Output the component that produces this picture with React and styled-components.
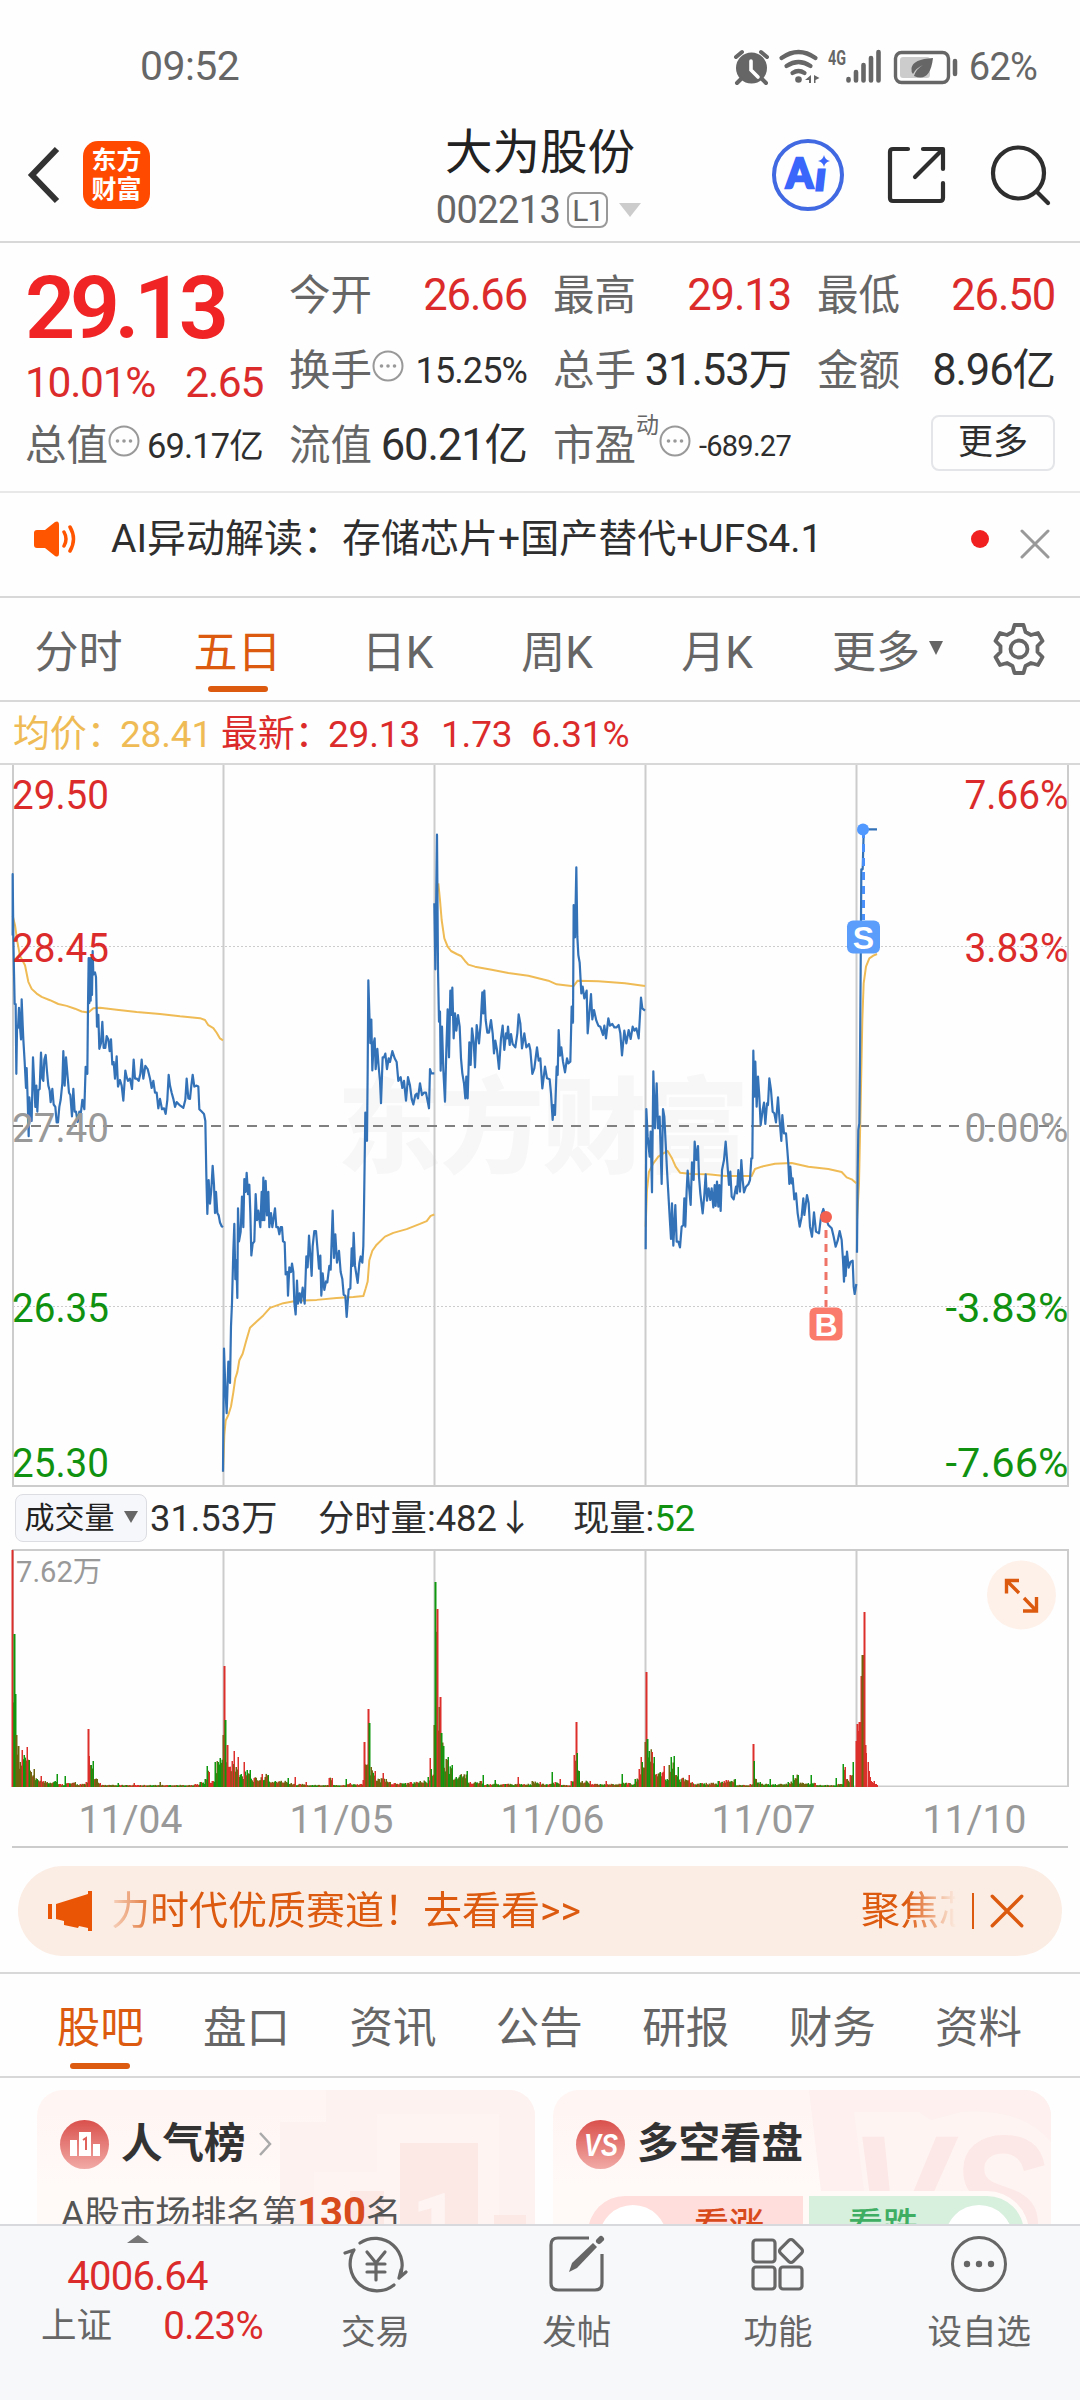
import styled, { createGlobalStyle } from "styled-components"

const RED = "#dc2b2b"
const BIG_RED = "#f02424"
const GREEN = "#109210"
const ORANGE = "#dc5a10"
const GRAY = "#666"
const INK = "#2e2e2e"

/* one trading session = one price line + one average line, in chart units */
const sessions = [
  {
    transform: "translate(0 760) scale(0.33333 0.47192)",
    price: "38,372 38,242 40,372 42,450 44,517 47,517 49,665 51,570 54,567 57,525 60,565 63,592 65,507 68,560 70,592 74,640 78,695 80,653 83,720 86,797 88,715 92,745 95,765 99,630 103,690 106,735 109,690 112,745 115,700 119,697 123,620 127,675 130,680 133,635 137,625 141,660 145,690 149,700 152,725 157,697 161,730 166,735 170,768 174,768 178,735 182,720 187,685 190,617 194,690 198,630 203,672 207,705 211,710 216,755 220,697 224,745 228,745 233,767 238,745 242,752 247,720 253,740 257,650 262,665 264,520 266,420 268,515 270,420 272,510 274,420 276,498 278,405 280,455 285,450 288,460 291,565 295,540 298,612 303,600 307,555 311,610 316,610 320,585 325,592 329,617 333,592 337,645 341,640 345,675 350,628 354,692 360,678 365,690 370,722 376,658 380,672 384,680 390,675 396,697 401,635 405,675 410,675 416,680 421,665 425,635 430,675 436,648 443,655 450,675 455,695 460,680 465,705 470,705 475,738 480,718 486,740 492,738 497,750 502,720 506,667 510,690 515,705 520,718 525,735 530,725 540,732 550,737 556,720 560,675 565,717 570,718 574,690 578,667 583,692 590,690 595,692 598,740 605,745 612,750 616,765 619,880 622,962 626,890 630,940 634,910 638,860 642,900 645,960 648,915 652,960 656,965 660,980 665,988 669,990",
    avg: "38,330 45,350 52,385 60,415 75,435 85,470 95,485 110,495 125,502 150,509 175,517 200,521 225,527 245,533 265,535 280,526 300,525 350,529 410,534 480,538 540,543 600,547 615,551 625,562 640,568 650,578 660,590 669,594",
  },
  {
    transform: "translate(0 760) scale(0.33333 0.47192)",
    price: "669,1508 672,1247 676,1330 680,1384 685,1275 690,1320 693,1200 696,1150 700,1040 703,983 706,1100 709,1060 712,1140 714,950 717,1020 722,1000 726,925 730,990 733,888 737,915 740,875 744,920 748,900 751,960 754,1050 758,1025 763,1020 767,920 771,975 775,955 781,990 785,915 788,975 790,885 793,975 797,892 801,965 805,915 808,990 813,960 817,990 825,950 829,990 834,990 838,1005 842,990 846,990 849,1020 854,1022 857,1090 862,1085 864,1135 868,1075 873,1085 876,1067 880,1085 883,1150 887,1175 891,1103 894,1152 899,1130 903,1150 908,1118 914,1152 919,1052 923,1075 927,1008 931,1050 935,1093 938,1030 943,998 948,998 953,1040 957,1078 961,1050 964,1135 968,1088 973,1123 978,1105 982,1107 988,1072 992,1080 998,955 1002,1055 1006,1005 1011,1065 1017,1040 1022,1085 1027,1100 1031,1133 1036,1135 1040,1180 1046,1122 1051,1120 1055,1035 1058,1072 1061,1002 1065,1072 1073,1108 1078,1067 1082,1052 1087,1065 1090,1030 1092,950 1094,850 1096,747 1101,807 1103,660 1105,467 1108,535 1111,600 1114,550 1117,658 1121,600 1124,590 1127,655 1132,612 1136,650 1140,680 1143,727 1148,630 1152,630 1156,622 1161,655 1166,632 1170,640 1177,617 1184,632 1190,640 1195,680 1202,672 1207,695 1212,680 1218,722 1224,672 1230,690 1235,718 1240,730 1246,710 1250,707 1254,717 1260,685 1266,710 1272,705 1278,705 1287,738 1290,655 1294,664 1303,664",
    avg: "669,1508 673,1430 677,1400 685,1388 693,1370 700,1340 706,1310 712,1297 718,1272 728,1258 738,1232 750,1203 770,1190 790,1177 810,1161 850,1151 890,1146 950,1144 1010,1140 1060,1138 1090,1136 1097,1120 1103,1105 1108,1060 1117,1040 1130,1027 1155,1010 1180,1002 1220,994 1260,983 1280,977 1292,966 1303,963",
  },
  {
    transform: "translate(425 820) scale(0.33333)",
    price: "28,250 31,448 36,44 39,450 42,605 45,575 47,752 51,620 55,750 60,845 64,690 68,568 72,712 76,512 79,585 82,503 86,655 90,580 94,632 99,585 104,620 108,715 112,760 117,790 121,835 124,770 128,835 133,667 137,735 141,625 146,665 150,742 155,615 162,670 167,610 172,517 175,580 178,512 182,600 187,638 192,638 198,600 203,640 207,700 211,662 216,690 222,747 228,655 233,617 238,690 243,640 246,655 249,620 254,675 258,642 263,672 271,682 277,640 281,583 286,610 291,685 298,640 304,682 312,672 316,690 322,762 328,745 336,682 341,722 346,715 352,805 360,740 366,775 374,778 378,820 383,900 386,855 390,885 395,740 398,765 401,630 405,707 409,682 414,725 420,757 426,715 430,730 436,725 440,560 444,608 446,255 450,352 454,142 457,350 460,405 464,428 469,520 473,500 478,535 485,512 488,640 493,580 498,522 502,598 507,570 514,602 520,617 526,620 534,645 538,617 543,655 550,595 555,617 562,612 568,622 575,622 581,615 586,640 591,706 598,632 604,670 611,630 617,657 623,620 628,632 634,625 641,655 648,533 652,565 660,572",
    avg: "40,190 45,240 50,300 58,355 68,380 78,393 95,402 108,408 120,423 130,434 150,440 200,449 250,459 310,467 370,482 395,493 445,499 458,482 520,484 600,490 660,498",
  },
  {
    transform: "translate(425 820) scale(0.33333)",
    price: "662,1288 664,867 668,950 674,1010 677,935 681,1117 685,754 690,925 695,790 699,925 704,890 710,1092 714,867 718,890 722,970 726,1050 730,1120 734,1190 738,1257 741,1150 745,1277 751,1155 755,1265 760,1265 765,1282 770,1220 775,1215 778,1135 781,1220 785,1110 788,1052 792,1100 797,1155 801,1027 806,1080 809,965 814,1020 819,978 822,1070 826,1120 833,1180 838,1125 842,1063 846,1142 851,1105 856,1140 860,1105 865,1162 869,1095 872,1158 876,1085 880,1160 883,1095 887,1173 891,1050 897,1020 902,965 907,1030 912,1095 916,1055 920,1130 926,1138 933,1100 936,1120 940,1050 945,1115 949,1020 953,1080 957,1117 963,1100 970,1093 975,1080 979,1015 982,1015 985,692 988,830 991,725 995,860 999,770 1003,830 1007,915 1013,870 1017,848 1021,912 1026,850 1029,855 1033,775 1038,810 1043,875 1048,880 1053,907 1059,832 1063,890 1069,963 1072,885 1077,940 1083,940 1087,990 1090,1030 1093,1092 1096,1040 1100,1090 1103,1075 1108,1138 1113,1120 1118,1180 1124,1220 1130,1190 1135,1135 1138,1185 1146,1125 1151,1150 1155,1220 1161,1250 1167,1177 1173,1235 1182,1240 1188,1190 1195,1167 1203,1195 1210,1215 1220,1225 1226,1250 1232,1280 1238,1262 1244,1233 1250,1260 1254,1320 1257,1385 1260,1310 1262,1368 1266,1295 1271,1343 1277,1325 1283,1322 1286,1400 1289,1422 1294,1392",
    avg: "662,1220 666,1110 672,1055 685,1030 700,1010 715,1000 728,993 740,1013 752,1040 765,1058 800,1062 850,1063 900,1068 980,1068 990,1047 1010,1040 1050,1031 1100,1029 1150,1040 1210,1047 1250,1056 1265,1072 1280,1078 1294,1090",
  },
  {
    transform: "translate(425 820) scale(0.33333)",
    price: "1296,1298 1298,1060 1300,930 1303,910 1305,720 1307,450 1309,148 1313,148 1316,40 1318,28 1356,28",
    avg: "1296,1200 1302,1090 1307,850 1312,600 1316,490 1323,440 1333,415 1345,407 1356,402",
  },
]

/* x:height:colour  (r = up, g = down, m = both in one pixel) */
const volumePeaks =
  "12:237:r 14:153:g 15:93:g 16:52:m 18:41:m 20:25:m 22:37:r 24:32:g 27:40:r 29:27:g 31:15:m 34:18:m 37:8:g 41:11:r 45:6:m 55:6:g 57:13:g 60:3:r 65:11:g 68:4:r 75:5:m 80:3:r 86:5:r 88:58:r 89:31:r 91:22:g 93:26:g 95:8:m 97:8:m 100:4:r 110:2:m 118:4:g 126:2:g 134:4:r 140:2:m 160:5:m 170:2:g 195:3:r 200:5:g 205:8:g 207:21:g 209:15:r 212:6:r 215:25:g 218:25:g 220:29:g 223:52:m 224:121:r 225:67:g 227:42:r 229:20:r 232:26:r 234:36:r 236:20:m 238:30:r 241:13:g 244:25:r 247:17:g 250:17:g 254:9:r 262:13:r 268:12:g 275:6:g 288:9:g 291:4:m 295:10:r 300:3:r 306:5:r 312:2:g 327:2:m 329:9:r 332:9:r 336:2:m 346:8:g 350:4:r 360:3:r 363:7:r 364:45:r 366:22:m 368:78:r 369:64:g 371:20:m 375:16:r 379:8:m 383:14:r 386:8:m 390:5:m 405:4:g 410:5:r 420:6:m 428:10:g 430:29:r 431:18:g 434:62:m 435:205:g 437:178:r 439:80:m 440:90:r 441:54:g 443:41:g 446:28:m 448:30:g 452:22:g 456:10:g 460:12:g 467:16:g 470:5:r 480:6:m 483:12:g 487:3:g 495:7:g 505:3:g 515:3:m 518:10:r 521:3:g 532:6:m 540:5:r 550:3:m 552:15:g 555:5:r 560:8:r 566:2:m 571:6:r 574:32:r 576:65:r 577:34:g 579:16:g 582:6:m 590:6:r 600:3:g 606:6:r 620:3:r 622:13:g 625:4:g 635:8:g 639:18:r 641:30:r 642:25:g 645:45:m 646:115:r 647:48:g 649:36:g 652:35:r 654:30:g 656:13:r 660:15:g 664:21:r 667:8:g 669:22:m 671:30:g 674:31:g 676:12:m 678:20:g 682:9:r 689:12:r 692:5:r 700:4:g 718:6:g 726:7:r 735:8:g 740:2:m 750:3:r 753:43:r 754:26:g 756:8:m 760:5:g 768:3:g 770:8:g 775:3:g 788:5:g 793:12:g 798:12:g 803:4:m 808:4:g 811:12:g 815:4:r 825:2:g 836:9:g 840:3:m 843:23:g 845:20:r 847:8:m 850:12:r 853:25:g"

const todayVolume = "856:46:r 857:63:r 858:56:r 859:65:r 860:65:r 861:111:r 862:132:m 863:132:m 864:175:r 865:42:r 866:34:r 868:25:r 869:16:r 870:10:r 871:6:r 872:5:r 873:4:r 874:6:r 875:3:r 876:3:r 877:2:r"

const volumeColors = { r: "#dc2f2b", g: "#0f980f", m: "#70650f" }

function parseBars(text) {
  return text.split(" ").map((item) => {
    const [x, h, c] = item.split(":")
    return { x: Number(x), h: Number(h), c }
  })
}

// the quiet minutes between two peaks get a small, repeatable jitter
function fillBars(peaks) {
  const bars = []
  for (let i = 0; i < peaks.length - 1; i++) {
    const a = peaks[i]
    const b = peaks[i + 1]
    for (let x = a.x + 1; x < b.x; x++) {
      const low = Math.min(a.h, b.h)
      const noise = Math.abs(Math.sin(x * 12.9898) * 43758.5453) % 1
      bars.push({ x, h: Math.max(1.5, low * (0.55 + noise * 0.55)), c: "grmmgrm"[Math.floor(noise * 7)] })
    }
  }
  return bars
}

const peaks = parseBars(volumePeaks)
const bars = [...fillBars(peaks), ...peaks, ...parseBars(todayVolume)]

const priceLabels = [
  { y: 808.5, left: "29.50", right: "7.66%", color: RED, w: 104 },
  { y: 962, left: "28.45", right: "3.83%", color: RED, w: 104 },
  { y: 1142, left: "27.40", right: "0.00%", color: "#999", w: 104 },
  { y: 1322, left: "26.35", right: "-3.83%", color: GREEN, w: 123 },
  { y: 1476.5, left: "25.30", right: "-7.66%", color: GREEN, w: 123 },
]

const Dots = () => (
  <svg width="32" height="32" viewBox="0 0 32 32">
    <circle cx="16" cy="16" r="14.5" fill="none" stroke="#999" strokeWidth="2" />
    <circle cx="9.5" cy="16" r="1.8" fill="#999" />
    <circle cx="16" cy="16" r="1.8" fill="#999" />
    <circle cx="22.5" cy="16" r="1.8" fill="#999" />
  </svg>
)

const StatusIcons = () => (
  <svg width="226" height="36" viewBox="734 47 226 36" fill={GRAY}>
    <circle cx="752.5" cy="66" r="15.5" />
    <path d="M737 55l6-5M768 55l-6-5M742 77l-4 4M763 77l4 4" stroke={GRAY} strokeWidth="4" strokeLinecap="round" />
    <path d="M752 59v9l7 7" fill="none" stroke="#fff" strokeWidth="3.6" strokeLinecap="round" />
    <g fill="none" stroke={GRAY} strokeWidth="4.2" strokeLinecap="round">
      <path d="M782.500 56q17-12 34 0M787.500 64q12-8 24 0M793.500 71q6-4 12 0" />
    </g>
    <circle cx="799.500" cy="77.500" r="3.300" />
    <path d="M812 73v8h-2v-3h-4zM815 73v8h1.500v-3l4-2z" />
    <text x="829" y="62.500" fontSize="20" fontWeight="700" textLength="18" lengthAdjust="spacingAndGlyphs">4G</text>
    <g stroke={GRAY} strokeWidth="4.6" strokeLinecap="round">
      <path d="M849.500 77v1.500M857 70v8.500M864.500 63v15.500M872 56v22.500M879.500 50v28.500" />
    </g>
    <rect x="896.500" y="50.500" width="53" height="30" rx="6" fill="none" stroke={GRAY} strokeWidth="3.4" />
    <rect x="901" y="55" width="30" height="21" rx="3" fill="#ccc" />
    <path d="M934 56q-20 1-21.500 10-.5 4 1.500 6 3-6 10-9-7 4-9 11 16 7 19-18z" />
    <path d="M956 59v13" stroke={GRAY} strokeWidth="4.500" strokeLinecap="round" />
  </svg>
)

const ShareIcon = () => (
  <svg width="60" height="60" viewBox="0 0 60 60" fill="none" stroke={INK} strokeWidth="4.200" strokeLinecap="round" strokeLinejoin="round">
    <path d="M22 4H7q-3 0-3 3v46q0 3 3 3h47q3 0 3-3V38" />
    <path d="M37 4h20v20M56 5L29 32" />
  </svg>
)

const SearchIcon = () => (
  <svg width="62" height="62" viewBox="0 0 62 62" fill="none" stroke={INK} strokeWidth="4.200" strokeLinecap="round">
    <circle cx="29.500" cy="29" r="25.500" />
    <path d="M48 48l11 11" />
  </svg>
)

const AiIcon = () => (
  <svg width="74" height="74" viewBox="0 0 74 74">
    <circle cx="37" cy="37" r="34" fill="none" stroke="#4169e1" strokeWidth="4" />
    <text x="15" y="50" fontFamily="Lato, Liberation Sans" fontSize="41" fontWeight="900" fill="#3a66fb" stroke="#3a66fb" strokeWidth="2.500" textLength="27" lengthAdjust="spacingAndGlyphs">A</text>
    <text x="45" y="52" fontFamily="Lato, Liberation Sans" fontSize="37" fontWeight="900" fontStyle="italic" fill="#3a66fb" stroke="#3a66fb" strokeWidth="3">ı</text>
    <path d="M53 17q1 5 6 6-5 1-6 6-1-5-6-6 5-1 6-6z" fill="#3a66fb" />
  </svg>
)

const SpeakerIcon = () => (
  <svg width="46" height="38" viewBox="0 0 46 38">
    <path d="M4 10h8L22 2q4-2 4 3v28q0 5-4 3L12 28H4q-3 0-3-3V13q0-3 3-3z" fill="#ff5500" />
    <path d="M31 12q4 7 0 14M37 7q7 12 0 24" fill="none" stroke="#ff5500" strokeWidth="3.500" strokeLinecap="round" />
  </svg>
)

const GearIcon = () => (
  <svg width="54" height="54" viewBox="0 0 54 54" fill="none" stroke={GRAY} strokeWidth="3.800" strokeLinejoin="round">
    <path d="M22.500 3h9l2 7 5.500 3 7-2 4.500 8-5 5v6l5 5-4.500 8-7-2-5.500 3-2 7h-9l-2-7-5.500-3-7 2-4.500-8 5-5v-6l-5-5 4.500-8 7 2 5.500-3z" />
    <circle cx="27" cy="27" r="8.500" />
  </svg>
)

const MegaphoneIcon = () => (
  <svg width="46" height="40" viewBox="0 0 46 40" fill="#e95504">
    <path d="M0 13h4v15H0zM8 13L40 3V0h4v40h-4v-3l-9-2-1 2-14-3v-4l-8-2z" />
  </svg>
)

const TradeIcon = () => (
  <svg width="66" height="60" viewBox="0 0 66 60" fill="none" stroke={GRAY} strokeWidth="3.200" strokeLinecap="round" strokeLinejoin="round">
    <path d="M2 19l9-3A27 27 0 0 0 51 51M17 9A27 27 0 0 1 56 44l7-6M56 44l2-8" />
    <path d="M24 18l9 11 9-11M33 29v17M24 30h18M24 38h18" />
  </svg>
)

const PostIcon = () => (
  <svg width="58" height="58" viewBox="0 0 58 58" fill="none" stroke={GRAY} strokeWidth="3.200">
    <path d="M41 3H10q-7 0-7 7v38q0 7 7 7h37q7 0 7-7V19" />
    <path d="M21 37l3-9L45 8l4 4-20 21z" fill={GRAY} stroke="none" />
    <path d="M51 6l2-2" strokeWidth="6" strokeLinecap="round" />
  </svg>
)

const AppsIcon = () => (
  <svg width="56" height="56" viewBox="0 0 56 56" fill="none" stroke={GRAY} strokeWidth="3.200">
    <rect x="3" y="4" width="22" height="22" rx="3" />
    <rect x="3" y="31" width="22" height="22" rx="3" />
    <rect x="30" y="31" width="22" height="22" rx="3" />
    <rect x="32" y="6" width="18" height="18" rx="3" transform="rotate(45 41 15)" />
  </svg>
)

const MoreIcon = () => (
  <svg width="58" height="58" viewBox="0 0 58 58" fill={GRAY}>
    <circle cx="29" cy="29" r="26.500" fill="none" stroke={GRAY} strokeWidth="3" />
    <circle cx="17" cy="29" r="3.200" />
    <circle cx="29" cy="29" r="3.200" />
    <circle cx="41" cy="29" r="3.200" />
  </svg>
)

const CloseIcon = ({ size, color, width = 3 }) => (
  <svg width={size} height={size} viewBox="0 0 30 30" stroke={color} strokeWidth={width} strokeLinecap="round">
    <path d="M2 2l26 26M28 2L2 28" />
  </svg>
)

const Triangle = ({ w, h, color, up }) => (
  <svg width={w} height={h} viewBox="0 0 10 10" preserveAspectRatio="none" fill={color}>
    <path d={up ? "M0 10h10L5 0z" : "M0 0h10L5 10z"} />
  </svg>
)

const PriceChart = () => (
  <svg width="1080" height="722" viewBox="0 765 1080 722">
    <text x="337" y="1165" fontSize="104" fontWeight="900" fill="#f7f7f7" textLength="412">东方财富</text>
    <g stroke="#ccc" strokeWidth="2" fill="none">
      <path d="M13 764V1486M223.500 764V1486M434.500 764V1486M645.500 764V1486M856.500 764V1486M1068 764V1486M12 1486H1069" />
      <path d="M13 946.500H1068M13 1306.500H1068" strokeWidth="1" strokeDasharray="2 2" />
    </g>
    <path d="M13 1126H1060" stroke="#808080" strokeWidth="2" strokeDasharray="10 8" />
    {sessions.map((s) => (
      <g key={s.price.slice(0, 12)} transform={s.transform} fill="none" strokeLinejoin="round">
        <polyline points={s.avg} stroke="#efbb55" strokeWidth="2" vectorEffect="non-scaling-stroke" />
        <polyline points={s.price} stroke="#3472b8" strokeWidth="2.200" vectorEffect="non-scaling-stroke" />
      </g>
    ))}
    <path d="M863.500 830V920" stroke="#4a90fb" strokeWidth="3" strokeDasharray="8 6" />
    <circle cx="863" cy="829.500" r="6" fill="#5199ff" />
    <path d="M826 1230V1307" stroke="#ee7468" strokeWidth="3" strokeDasharray="8 6" />
    <circle cx="826" cy="1217" r="6" fill="#f4604f" />
    {priceLabels.map((l) => (
      <g key={l.left} fontSize="41.500" fill={l.color}>
        <text x="12" y={l.y} textLength="97" lengthAdjust="spacingAndGlyphs">{l.left}</text>
        <text x={1068.5 - l.w} y={l.y} textLength={l.w} lengthAdjust="spacingAndGlyphs">{l.right}</text>
      </g>
    ))}
    <g fontFamily="Liberation Sans" fontWeight="700" fontSize="32" fill="#fff" textAnchor="middle">
      <rect x="847" y="920.500" width="33" height="33" rx="6" fill="#5b9dfb" />
      <text x="863.500" y="948.500">S</text>
      <rect x="809.500" y="1307.500" width="33" height="33" rx="6" fill="#fa7a6c" />
      <text x="826" y="1335.500">B</text>
    </g>
  </svg>
)

const VolumeChart = () => (
  <svg width="1080" height="238" viewBox="0 1549 1080 238">
    <path d="M12 1550H1069M12 1786.500H1069M13 1550V1786M223.500 1550V1786M434.500 1550V1786M645.500 1550V1786M856.500 1550V1786M1068 1550V1786" stroke="#ccc" strokeWidth="2" />
    {bars.map((b, i) => (
      <rect key={i} x={b.x - 0.5} y={1787 - b.h} width={b.h > 40 ? 2 : 1.5} height={b.h} fill={volumeColors[b.c]} />
    ))}
    <text x="16" y="1582" fontSize="29" fill="#999" textLength="86" lengthAdjust="spacingAndGlyphs">7.62万</text>
    <circle cx="1021.500" cy="1595" r="34.500" fill="#fef1ea" />
    <path d="M1019 1580.500h-12.500v13M1007.500 1581.500l11.500 11.500M1023 1611h13.500v-14M1035.500 1610l-11.500-12" fill="none" stroke={ORANGE} strokeWidth="3.400" />
  </svg>
)

export default function App() {
  return (
    <Screen>
      <GlobalStyle />
      <StatusBar>
        <Txt $size={41} $color={GRAY} $track={-0.6}>09:52</Txt>
        <StatusRight>
          <StatusIcons />
          <Txt $size={38} $color={GRAY} $track={-0.8}>62%</Txt>
        </StatusRight>
      </StatusBar>

      <Header>
        <HeaderSide>
          <svg width="34" height="58" viewBox="0 0 34 58" fill="none" stroke="#333" strokeWidth="6">
            <path d="M30 3L5 29l25 26" />
          </svg>
          <Logo>
            <span>东方</span>
            <span>财富</span>
          </Logo>
        </HeaderSide>
        <TitleBlock>
          <Title>大为股份</Title>
          <CodeRow>
            <Txt $size={38} $color={GRAY} $track={-0.6}>002213</Txt>
            <Level>L1</Level>
            <Triangle w={22} h={14} color="#ccc" />
          </CodeRow>
        </TitleBlock>
        <HeaderActions>
          <AiIcon />
          <ShareIcon />
          <SearchIcon />
        </HeaderActions>
      </Header>

      <Quotes>
        <Headline>
          <BigPrice>29.13</BigPrice>
          <ChangeRow>
            <Txt $size={42.5} $color={RED} $track={-1.3}>10.01%</Txt>
            <Txt $size={42.5} $color={RED} $track={-1.3}>2.65</Txt>
          </ChangeRow>
        </Headline>
        <Cell><Label>今开</Label><Value $color={RED}>26.66</Value></Cell>
        <Cell><Label>最高</Label><Value $color={RED}>29.13</Value></Cell>
        <Cell><Label>最低</Label><Value $color={RED}>26.50</Value></Cell>
        <Cell><Label>换手<Dots /></Label><Value $size={36}>15.25%</Value></Cell>
        <Cell><Label>总手</Label><Value>31.53万</Value></Cell>
        <Cell><Label>金额</Label><Value>8.96亿</Value></Cell>
        <Cell><Label>总值<Dots /></Label><Value $size={34.5}>69.17亿</Value></Cell>
        <Cell><Label>流值</Label><Value>60.21亿</Value></Cell>
        <Cell><Label>市盈<Sup>动</Sup><Dots /></Label><Value $size={29}>-689.27</Value></Cell>
        <Cell><span /><MoreButton>更多</MoreButton></Cell>
      </Quotes>

      <Notice>
        <SpeakerIcon />
        <NoticeText>AI异动解读：存储芯片+国产替代+UFS4.1</NoticeText>
        <RedDot />
        <CloseBox>
          <CloseIcon size={30} color="#999" />
        </CloseBox>
      </Notice>

      <PeriodTabs>
        <Period>分时</Period>
        <Period $active>五日</Period>
        <Period>日K</Period>
        <Period>周K</Period>
        <Period>月K</Period>
        <Period>更多<Triangle w={14} h={14} color={GRAY} /></Period>
        <GearIcon />
      </PeriodTabs>

      <AverageRow>
        <Avg $w={107} $color="#efbb55">均价：</Avg>
        <Avg $w={101} $color="#efbb55">28.41</Avg>
        <Avg $w={107} $color={RED}>最新：</Avg>
        <Avg $w={113} $color={RED}>29.13</Avg>
        <Avg $w={90} $color={RED}>1.73</Avg>
        <Avg $color={RED}>6.31%</Avg>
      </AverageRow>

      <PriceChart />

      <VolumeHead>
        <Picker>成交量<Triangle w={14} h={12} color={GRAY} /></Picker>
        <VolText $w={168}>31.53万</VolText>
        <VolText $w={255}>分时量:482↓</VolText>
        <VolText>现量:<b>52</b></VolText>
      </VolumeHead>
      <VolumeChart />
      <Dates>
        {["11/04", "11/05", "11/06", "11/07", "11/10"].map((d) => (
          <span key={d}>{d}</span>
        ))}
      </Dates>

      <BannerArea>
        <Banner>
          <MegaphoneIcon />
          <Ticker>
            <span>力时代优质赛道！去看看&gt;&gt;</span>
            <span>聚焦芯</span>
          </Ticker>
          <Divider />
          <CloseIcon size={34} color={ORANGE} />
        </Banner>
      </BannerArea>

      <InfoTabs>
        {["股吧", "盘口", "资讯", "公告", "研报", "财务", "资料"].map((t, i) => (
          <InfoTab key={t} $active={i === 0}>{t}</InfoTab>
        ))}
      </InfoTabs>

      <Cards>
        <Card>
          <CardArt width="498" height="134" viewBox="37 2090 498 134">
            <path d="M315 2122h11v-32h209v134H280v-102z" fill="#fdf2f0" />
            <path d="M314 2172h63v-58h122v110H314z" fill="#fef5f2" />
            <path d="M400 2143h78v81h-78zM350 2191h34v33h-34zM494 2215h32v9h-32z" fill="#fce9e6" />
            <text x="412" y="2250" fontSize="80" fontWeight="900" fill="#fef5f2">1</text>
          </CardArt>
          <CardHead>
            <Badge>
              <svg width="32" height="28" viewBox="0 0 32 28" fill="#fff">
                <path d="M1 10h7v16H1zM10 2h12v24H10zM24 14h7v12h-7z" />
                <path d="M14 10l3-2v12" fill="none" stroke="#e0605c" strokeWidth="2" />
              </svg>
            </Badge>
            <span>人气榜</span>
            <svg width="15" height="24" viewBox="0 0 15 24" fill="none" stroke="#aaa" strokeWidth="2.500">
              <path d="M2 1l10 11L2 23" />
            </svg>
          </CardHead>
          <Rank>A股市场排名第<b>130</b>名</Rank>
        </Card>
        <Card>
          <CardArt width="498" height="134" viewBox="553 2090 498 134">
            <path d="M809 2090h242v134H825z" fill="#fdf0ee" />
            <path d="M854 2112h65l12 8 30-8q60-5 90 30v82H868z" fill="#fef4f2" />
            <text x="850" y="2262" fontFamily="Liberation Sans" fontSize="182" fontWeight="700" fontStyle="italic" fill="#fce8e6" textLength="196" lengthAdjust="spacingAndGlyphs">VS</text>
          </CardArt>
          <CardHead>
            <Badge>
              <svg width="40" height="30" viewBox="0 0 40 30">
                <text x="3" y="27" fontFamily="Liberation Sans" fontSize="32" fontWeight="700" fontStyle="italic" fill="#fff" textLength="34" lengthAdjust="spacingAndGlyphs">VS</text>
              </svg>
            </Badge>
            <span>多空看盘</span>
          </CardHead>
          <Poll>
            <Side $up><Knob />看涨</Side>
            <Side>看跌<Knob /></Side>
          </Poll>
        </Card>
      </Cards>

      <BottomBar>
        <IndexBox>
          <Triangle w={22} h={8} color="#777" up />
          <Txt $size={40} $color={RED} $track={-0.7}>4006.64</Txt>
          <IndexRow>
            <Txt $size={35.5} $color={GRAY}>上证</Txt>
            <Txt $size={38.5} $color={RED} $track={-0.7}>0.23%</Txt>
          </IndexRow>
        </IndexBox>
        <Action><TradeIcon />交易</Action>
        <Action><PostIcon />发帖</Action>
        <Action><AppsIcon />功能</Action>
        <Action><MoreIcon />设自选</Action>
      </BottomBar>
    </Screen>
  )
}

const GlobalStyle = createGlobalStyle`
  * {
    box-sizing: border-box;
  }
  body {
    margin: 0;
    background: #fefefe;
    font-family: Roboto, "Noto Sans CJK SC", sans-serif;
  }
  svg {
    display: block;
    flex: none;
  }
`;

const Screen = styled.div`
  width: 1080px;
  height: 2400px;
  overflow: hidden;
  display: flex;
  flex-direction: column;
  background: #fefefe;
  color: ${INK};
  white-space: nowrap;
`;

const Txt = styled.span`
  font-size: ${(p) => p.$size}px;
  color: ${(p) => p.$color};
  letter-spacing: ${(p) => p.$track || 0}px;
  line-height: 1;
`;

const StatusBar = styled.div`
  height: 100px;
  padding: 33px 43px 0 140px;
  display: flex;
  justify-content: space-between;
  align-items: center;
  flex: none;
`;

const StatusRight = styled.div`
  display: flex;
  align-items: center;
  gap: 10px;
  svg {
    overflow: visible;
  }
`;

const Header = styled.header`
  height: 143px;
  flex: none;
  display: grid;
  grid-template-columns: 420px 240px 1fr;
  border-bottom: 2px solid #d8d8d8;
`;

const HeaderSide = styled.div`
  display: flex;
  align-items: center;
  gap: 22px;
  padding: 9px 0 0 27px;
`;

const Logo = styled.div`
  width: 67px;
  height: 68px;
  border-radius: 15px;
  background: #ff4a00;
  color: #fff;
  font-size: 25px;
  font-weight: 700;
  line-height: 29px;
  display: flex;
  flex-direction: column;
  align-items: center;
  justify-content: center;
`;

const TitleBlock = styled.div`
  display: flex;
  flex-direction: column;
  align-items: center;
  padding-top: 27px;
`;

const Title = styled.div`
  font-size: 47.5px;
  line-height: 52px;
  color: #222;
`;

const CodeRow = styled.div`
  display: flex;
  align-items: center;
  height: 38px;
  margin: 12px 0 0 -3px;
  gap: 7px;
  svg {
    margin-left: 4px;
  }
`;

const Level = styled.div`
  width: 41px;
  height: 36px;
  border: 2px solid #999;
  border-radius: 8px;
  font-size: 30px;
  letter-spacing: -1px;
  line-height: 33px;
  text-align: center;
  color: ${GRAY};
`;

const HeaderActions = styled.div`
  display: flex;
  align-items: center;
  padding: 8px 0 0 111px;
  gap: 41px;
  svg:last-child {
    margin-left: 2px;
  }
`;

const Quotes = styled.section`
  height: 250px;
  flex: none;
  padding: 15px 25px 0;
  display: grid;
  grid-template-columns: repeat(4, 238px);
  grid-auto-rows: 75px;
  column-gap: 26px;
  border-bottom: 2px solid #e8e8e8;
`;

const Headline = styled.div`
  grid-row: span 2;
`;

const BigPrice = styled.div`
  font-size: 88px;
  font-weight: 600;
  letter-spacing: -5.5px;
  line-height: 99px;
  color: ${BIG_RED};
`;

const ChangeRow = styled.div`
  display: flex;
  justify-content: space-between;
  align-items: center;
  height: 50px;
  padding-top: 2px;
`;

const Cell = styled.div`
  display: flex;
  justify-content: space-between;
  align-items: center;
`;

const Label = styled.span`
  display: flex;
  align-items: center;
  font-size: 41.5px;
  line-height: 48px;
  color: ${GRAY};
  svg {
    margin-bottom: 10px;
  }
`;

const Sup = styled.span`
  font-size: 23px;
  line-height: 24px;
  margin-bottom: 39px;
`;

const Value = styled.span`
  font-size: ${(p) => p.$size || 43.5}px;
  letter-spacing: -0.025em;
  line-height: 48px;
  color: ${(p) => p.$color || INK};
`;

const MoreButton = styled.div`
  width: 124px;
  height: 56px;
  margin-bottom: 6px;
  border: 2px solid #e4e5e8;
  border-radius: 8px;
  font-size: 35px;
  line-height: 51px;
  text-align: center;
`;

const Notice = styled.div`
  height: 105px;
  flex: none;
  display: flex;
  align-items: center;
  padding: 0 30px 11px 33px;
  border-bottom: 2px solid #d8d8d8;
`;

const NoticeText = styled.div`
  flex: 1;
  margin-left: 32px;
  font-size: 39px;
  line-height: 46px;
`;

const RedDot = styled.div`
  width: 18px;
  height: 18px;
  margin-right: 31px;
  border-radius: 50%;
  background: #f02020;
`;

const CloseBox = styled.div`
  padding-top: 10px;
`;

const PeriodTabs = styled.div`
  height: 104px;
  flex: none;
  display: grid;
  grid-template-columns: 157px 161px 159px 160px 160px 181px 1fr;
  align-items: center;
  border-bottom: 2px solid #d8d8d8;
  > svg {
    margin-left: 14px;
  }
`;

const Period = styled.div`
  height: 102px;
  display: flex;
  align-items: center;
  justify-content: center;
  font-size: 44px;
  color: ${(p) => (p.$active ? ORANGE : GRAY)};
  &::after {
    content: "";
    display: ${(p) => (p.$active ? "block" : "none")};
    width: 60px;
    height: 6px;
    margin: 80px 14px 0 -74px;
    border-radius: 3px;
    background: ${ORANGE};
  }
  svg {
    margin: -2px 0 0 9px;
  }
`;

const AverageRow = styled.div`
  height: 63px;
  flex: none;
  display: flex;
  align-items: baseline;
  padding-left: 13px;
  line-height: 65px;
  border-bottom: 2px solid #d8d8d8;
`;

const Avg = styled.span`
  height: 61px;
  width: ${(p) => (p.$w ? p.$w + "px" : "auto")};
  font-size: 37px;
  letter-spacing: -0.005em;
  color: ${(p) => p.$color};
`;

const VolumeHead = styled.div`
  height: 62px;
  flex: none;
  display: flex;
  align-items: center;
  padding-left: 15px;
`;

const Picker = styled.div`
  width: 132px;
  height: 48px;
  margin-right: 3px;
  display: flex;
  align-items: center;
  justify-content: center;
  gap: 9px;
  border: 1px solid #dcdde3;
  border-radius: 8px;
  background: #f6f7fa;
  font-size: 30px;
  line-height: 43px;
  padding-bottom: 2px;
  color: #222;
`;

const VolText = styled.span`
  width: ${(p) => (p.$w ? p.$w + "px" : "auto")};
  font-size: 36.3px;
  line-height: 56px;
  margin-top: 2px;
  b {
    font-weight: 400;
    color: ${GREEN};
  }
`;

const Dates = styled.div`
  height: 61px;
  flex: none;
  margin: 0 12px;
  display: grid;
  grid-template-columns: repeat(5, 211px);
  border-bottom: 2px solid #ccc;
  font-size: 39px;
  line-height: 66px;
  text-align: center;
  color: #999;
  span {
    padding-left: 26px;
  }
`;

const BannerArea = styled.div`
  height: 126px;
  flex: none;
  padding: 18px 18px 0;
  border-bottom: 2px solid #d8d8d8;
`;

const Banner = styled.div`
  height: 90px;
  border-radius: 45px;
  background: #fcede4;
  display: flex;
  align-items: center;
  padding: 0 38px 0 30px;
`;

const Ticker = styled.div`
  width: 846px;
  margin-left: 17px;
  overflow: hidden;
  display: flex;
  justify-content: space-between;
  font-size: 39px;
  line-height: 58px;
  color: ${ORANGE};
  mask-image: linear-gradient(90deg, transparent -10px, #000 50px, #000 795px, transparent 845px);
  span:last-child {
    margin-right: -22px;
  }
`;

const Divider = styled.div`
  width: 2px;
  height: 36px;
  margin: 0 16px;
  background: ${ORANGE};
`;

const InfoTabs = styled.div`
  height: 104px;
  flex: none;
  padding-left: 27px;
  display: grid;
  grid-template-columns: repeat(7, 146.4px);
  border-bottom: 2px solid #d8d8d8;
`;

const InfoTab = styled.div`
  display: flex;
  flex-direction: column;
  align-items: center;
  font-size: 43.5px;
  line-height: 110px;
  color: ${(p) => (p.$active ? ORANGE : GRAY)};
  &::after {
    content: "";
    display: ${(p) => (p.$active ? "block" : "none")};
    width: 60px;
    height: 6px;
    margin-top: -21px;
    border-radius: 3px;
    background: ${ORANGE};
  }
`;

const Cards = styled.div`
  height: 146px;
  flex: none;
  overflow: hidden;
  padding: 12px 28px 0 37px;
  display: grid;
  grid-template-columns: 498px 498px;
  gap: 18px;
`;

const Card = styled.div`
  position: relative;
  height: 240px;
  border-radius: 26px;
  overflow: hidden;
  background: linear-gradient(#fff5f3, #fffaf8 50%);
`;

const CardArt = styled.svg`
  position: absolute;
  top: 0;
  left: 0;
`;

const CardHead = styled.div`
  position: relative;
  height: 48px;
  margin: 30px 0 0 23px;
  display: flex;
  align-items: center;
  gap: 12px;
  font-size: 41.5px;
  font-weight: 700;
  line-height: 48px;
  color: #333;
  span {
    margin-top: -1px;
  }
`;

const Badge = styled.div`
  width: 49px;
  height: 49px;
  border-radius: 50%;
  display: flex;
  align-items: center;
  justify-content: center;
  background: linear-gradient(#d9504c, #f2aaa6);
`;

const Rank = styled.div`
  position: relative;
  margin: 19px 0 0 24px;
  font-size: 35.5px;
  line-height: 52px;
  color: #555;
  b {
    font-size: 40px;
    color: #d84a1c;
  }
`;

const Poll = styled.div`
  position: relative;
  width: 446px;
  height: 84px;
  margin: 23px 0 0 30px;
  display: flex;
  gap: 6px;
  padding: 5px;
  border-radius: 42px;
  overflow: hidden;
  background: #fffaf8;
`;

const Side = styled.div`
  flex: 1;
  display: flex;
  justify-content: ${(p) => (p.$up ? "flex-start" : "flex-end")};
  gap: 27px;
  padding: 9px 11px;
  border-radius: ${(p) => (p.$up ? "37px 0 0 37px" : "0 37px 37px 0")};
  background: ${(p) => (p.$up ? "#ffdedb" : "#d7efdd")};
  color: ${(p) => (p.$up ? "#d84a1c" : "#3fae63")};
  font-size: 35px;
  font-weight: 500;
  line-height: 44px;
`;

const Knob = styled.div`
  width: 68px;
  height: 68px;
  border-radius: 50%;
  background: #fff;
`;

const BottomBar = styled.nav`
  height: 177px;
  flex: none;
  display: grid;
  grid-template-columns: 275px repeat(4, 201.2px);
  border-top: 2px solid #d8d9dc;
  background: #f7f8fa;
`;

const IndexBox = styled.div`
  display: flex;
  flex-direction: column;
  align-items: center;
  padding-top: 9px;
  > span {
    margin-top: 14px;
  }
`;

const IndexRow = styled.div`
  width: 222px;
  margin: 10px 0 0 29px;
  display: flex;
  align-items: center;
  justify-content: space-between;
`;

const Action = styled.div`
  display: flex;
  flex-direction: column;
  align-items: center;
  padding-top: 8px;
  font-size: 34.5px;
  line-height: 46px;
  color: ${GRAY};
  svg {
    height: 60px;
    margin-bottom: 15px;
  }
`;
